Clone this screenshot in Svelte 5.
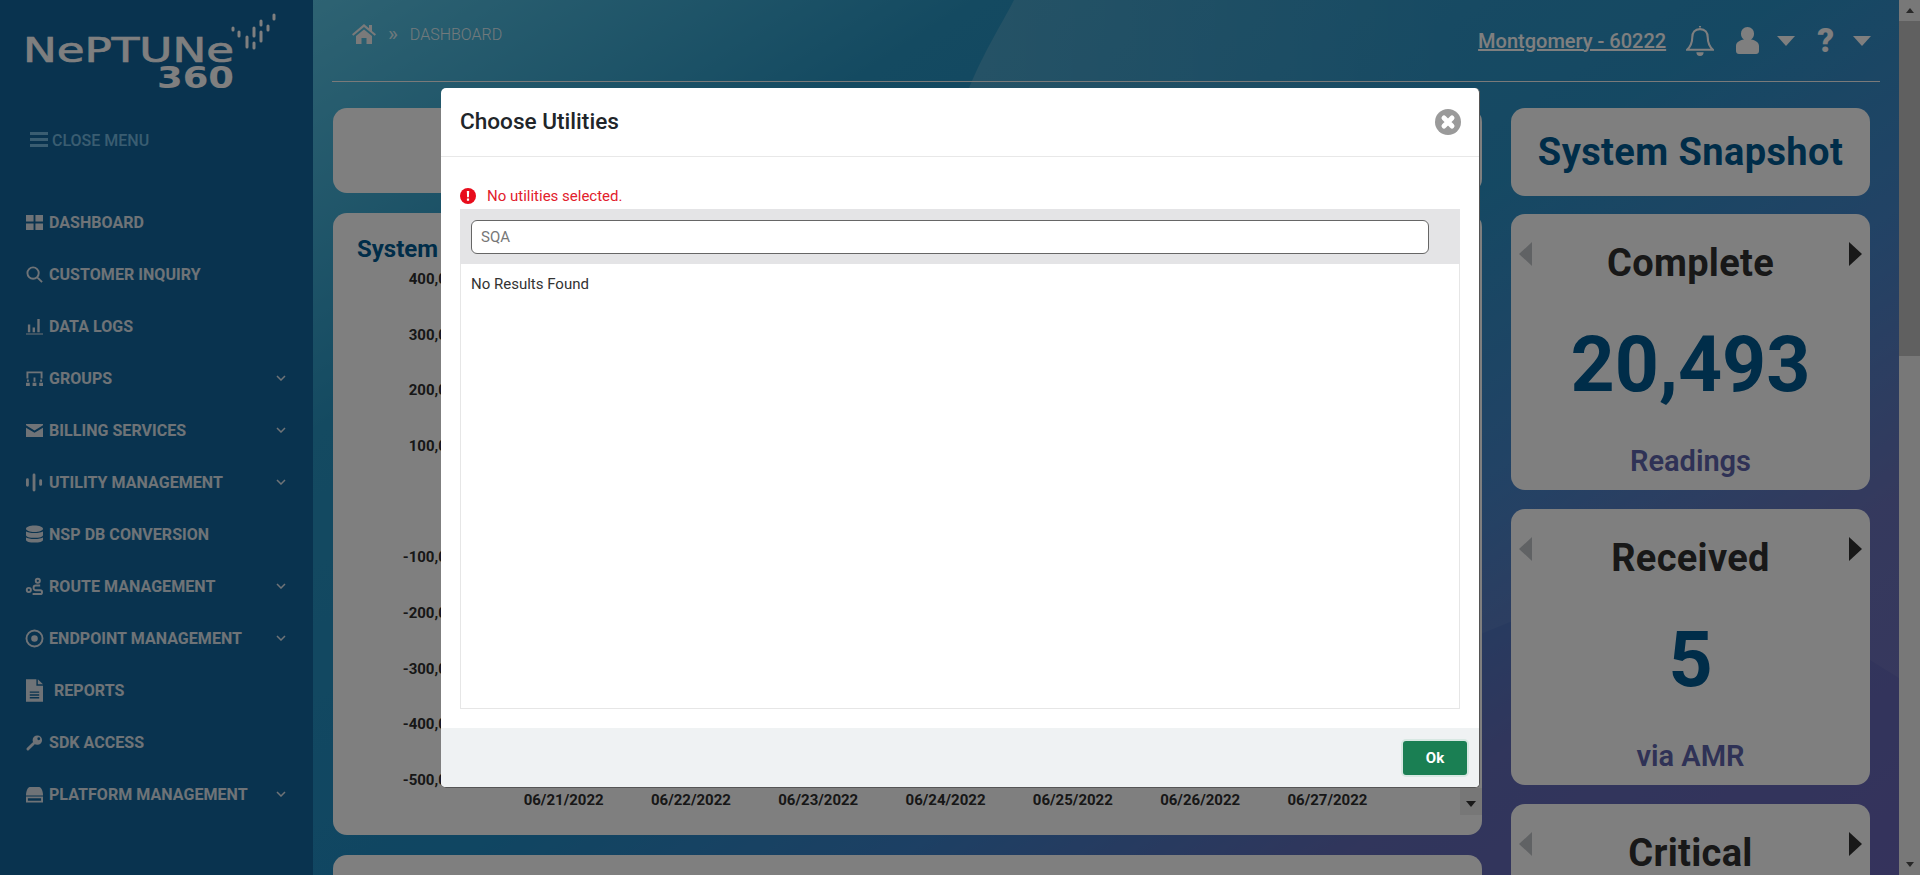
<script>
  const navItems = [
    { label: 'DASHBOARD', fill: 'M0 1h8v7H0zM10 1h8v7h-8zM0 10h8v7H0zM10 10h8v7h-8z' },
    { label: 'CUSTOMER INQUIRY', stroke: 'M7.5 1.5a6 6 0 1 0 0 12a6 6 0 0 0 0-12zM12 12l5 5' },
    { label: 'DATA LOGS', fill: 'M2 7h2.5v8H2zM7 10h2.5v5H7zM12 1h2.5v14H12zM0 16.5h18v1H0z' },
    { label: 'GROUPS', stroke: 'M1.5 9V2.500h15V9', fill: 'M0 13.500h4v3.500H0zM7 13.500h4v3.500H7zM14 13.500h4v3.500h-4zM1 10h2v2.500H1zM8 8h2v4.500H8zM15 10h2v2.500h-2z', more: true },
    { label: 'BILLING SERVICES', fill: 'M0 2h18v1.5L9 9 0 3.5zM0 6l9 5.500L18 6v10H0z', more: true },
    { label: 'UTILITY MANAGEMENT', stroke: 'M1.5 6v6M8.5 1v16M15.5 7v4', wide: true, more: true },
    { label: 'NSP DB CONVERSION', fill: 'M9 0C4 0 0 1.5 0 3.5S4 7 9 7s9-1.5 9-3.5S14 0 9 0zM0 6c2 2.500 16 2.500 18 0v4c0 2-4 3-9 3s-9-1-9-3zM0 12.500c2 2.500 16 2.500 18 0V15c0 2-4 3-9 3s-9-1-9-3z', big: true },
    { label: 'ROUTE MANAGEMENT', stroke: 'M12.500 0.800a2.200 2.200 0 1 0 0 4.400a2.200 2.200 0 0 0 0-4.400zM15 8h-4.500a2.500 2.500 0 0 0 0 5H15a2 2 0 0 1 0 4H7M3 10.500a2.200 2.200 0 1 0 0 4.400a2.200 2.200 0 0 0 0-4.400z', more: true },
    { label: 'ENDPOINT MANAGEMENT', stroke: 'M9 0.500a8.500 8.500 0 1 0 0 17a8.500 8.500 0 0 0 0-17z', fill: 'M9 5.500a3.500 3.500 0 1 0 0 7a3.500 3.500 0 0 0 0-7z', more: true },
    { label: 'REPORTS', fill: 'M0 0h11v7h7v17H0zM4 13v1.500h10V13zM4 16v1.500h10V16zM4 19v1.500h10V19zM12.500 0L18 5.500h-5.500z', tall: true },
    { label: 'SDK ACCESS', fill: 'M12 1.500a5 5 0 1 0 0 10a5 5 0 0 0 0-10zM13.500 3.500a1.500 1.500 0 1 1 0 3a1.500 1.500 0 0 1 0-3z', stroke: 'M8 10l-6 6', wide: true },
    { label: 'PLATFORM MANAGEMENT', fill: 'M4 1h10c2 0 4 4 4 9H0c0-5 2-9 4-9z', stroke: 'M1 12h16v4.500H1z', more: true }
  ];

  const yLabels = ['400,000', '300,000', '200,000', '100,000', '0', '-100,000', '-200,000', '-300,000', '-400,000', '-500,000'];
  const dates = ['06/21/2022', '06/22/2022', '06/23/2022', '06/24/2022', '06/25/2022', '06/26/2022', '06/27/2022'];
  const stats = [
    { title: 'Complete', value: '20,493', sub: 'Readings' },
    { title: 'Received', value: '5', sub: 'via AMR' },
    { title: 'Critical' }
  ];
  const signal = [[233, 28, 30], [239, 32, 36], [247, 37, 47], [254, 28, 36], [254, 43, 48], [261, 21, 25], [261, 32, 41], [268, 26, 30], [274, 15, 19]];
</script>

<div class="page">
  <aside class="sidebar">
    <svg class="logo" viewBox="0 0 290 100" width="290" height="100">
      <text class="logo-word" x="23" y="62" textLength="211" lengthAdjust="spacingAndGlyphs">NePTUNe</text>
      <text class="logo-num" x="157" y="88" textLength="77" lengthAdjust="spacingAndGlyphs">360</text>
      {#each signal as s}
        <path class="logo-dot" d="M{s[0]} {s[1]}V{s[2]}" />
      {/each}
    </svg>
    <div class="close-menu">
      <svg width="18" height="16" viewBox="0 0 18 16"><path d="M0 0h18v3H0zM0 6h18v3H0zM0 12h18v3H0z" /></svg>
      <span>CLOSE MENU</span>
    </div>
    <nav class="nav">
      {#each navItems as item}
        <div class="nav-item">
          <svg class="nav-icon" class:tall={item.tall} class:big={item.big} viewBox={item.tall ? '0 0 18 24' : '0 0 18 18'}>
            {#if item.fill}<path class="f" d={item.fill} />{/if}
            {#if item.stroke}<path class="s" class:wide={item.wide} d={item.stroke} />{/if}
          </svg>
          <span class:indent={item.tall}>{item.label}</span>
          {#if item.more}
            <svg class="chevron" viewBox="0 0 10 6"><path d="M1 1l4 4 4-4" /></svg>
          {/if}
        </div>
      {/each}
    </nav>
  </aside>

  <div class="main">
    <svg class="swoosh" viewBox="0 0 1586 875" width="1586" height="875">
      <defs>
        <linearGradient id="swooshFade" gradientUnits="userSpaceOnUse" x1="640" y1="0" x2="1150" y2="0">
          <stop offset="0" stop-color="#fff" stop-opacity="0.17" />
          <stop offset="1" stop-color="#fff" stop-opacity="0.05" />
        </linearGradient>
      </defs>
      <path fill="url(#swooshFade)" d="M701 0C670 60 640 90 600 300Q800 800 1170 633L1197 622Q1400 560 1557 660L1586 678V0Z" />
    </svg>

    <header class="topbar">
      <div class="crumbs">
        <svg class="home" viewBox="0 0 24 20" width="24" height="20">
          <path d="M12 0l5 4.300V1h3v5.900l4 3.400-1.300 1.500L12 3 1.300 11.800 0 10.300zM4 12l8-6.600 8 6.600v8h-5.500v-6h-5v6H4z" />
        </svg>
        <span class="sep">»</span>
        <span class="crumb">DASHBOARD</span>
      </div>
      <div class="top-right">
        <span class="site">Montgomery - 60222</span>
        <svg class="bell" viewBox="0.500 0 27 31" width="28" height="32">
          <path d="M14 2.500V1M14 4c-5 0-7.500 3.500-7.500 8 0 6-2 9-5 12h25c-3-3-5-6-5-12 0-4.500-2.500-8-7.500-8z" />
          <path class="clap" d="M10.500 26.500a3.500 3.500 0 0 0 7 0z" />
        </svg>
        <svg class="user" viewBox="0 0 23 27" width="23" height="27">
          <path d="M11.500 0a6.500 6.500 0 0 1 6.500 7c0 2.500-1.200 4.500-3 5.600 4.500.6 8 3 8 6.400v5c0 1.700-1.300 3-3 3H3c-1.700 0-3-1.300-3-3v-5c0-3.400 3.500-5.800 8-6.400C6.200 11.500 5 9.500 5 7a6.500 6.500 0 0 1 6.500-7z" />
        </svg>
        <span class="caret"></span>
        <span class="help">?</span>
        <span class="caret last"></span>
      </div>
    </header>

    <div class="content">
      <div class="left-col">
        <section class="card filter-card"></section>

        <section class="card chart-card">
          <h2>System</h2>
          <div class="y-axis">
            {#each yLabels as label}
              <span>{label}</span>
            {/each}
          </div>
          <div class="x-axis">
            {#each dates as d}
              <span>{d}</span>
            {/each}
          </div>
          <div class="chart-scroll"><i></i></div>
        </section>

        <section class="card grow"></section>
      </div>

      <div class="right-col">
        <section class="card snapshot">System Snapshot</section>
        {#each stats as stat}
          <section class="card stat">
            <div class="stat-head">
              <i class="tri left"></i>
              <h3>{stat.title}</h3>
              <i class="tri right"></i>
            </div>
            {#if stat.value}
              <div class="stat-value">{stat.value}</div>
              <div class="stat-sub">{stat.sub}</div>
            {/if}
          </section>
        {/each}
      </div>
    </div>
  </div>

  <div class="scrollbar">
    <div class="sb-btn"><i class="up"></i></div>
    <div class="sb-thumb"></div>
    <div class="sb-track"></div>
    <div class="sb-btn"><i class="down"></i></div>
  </div>

  <div class="backdrop">
    <div class="modal">
      <div class="modal-head">
        <h1>Choose Utilities</h1>
        <svg class="close" viewBox="0 0 26 26" width="26" height="26">
          <circle cx="13" cy="13" r="13" />
          <path d="M9 9l8 8M17 9l-8 8" />
        </svg>
      </div>
      <div class="modal-body">
        <div class="alert">
          <svg viewBox="0 0 16 16" width="16" height="16">
            <circle cx="8" cy="8" r="8" />
            <path d="M6.800 3h2.400l-.3 6.300H7.100zM6.900 10.400h2.200v2.300H6.900z" />
          </svg>
          <span>No utilities selected.</span>
        </div>
        <div class="search-bar">
          <input type="text" placeholder="SQA" />
        </div>
        <div class="results">No Results Found</div>
      </div>
      <div class="modal-foot">
        <button type="button">Ok</button>
      </div>
    </div>
  </div>
</div>

<style>
  :global(body) {
    overflow: hidden;
  }
  .page {
    position: relative;
    display: flex;
    width: 1920px;
    height: 875px;
    overflow: hidden;
    font-family: Roboto, "Liberation Sans", sans-serif;
  }

  /* sidebar */
  .sidebar {
    flex: 0 0 313px;
    background: #13669e;
    color: #dfe7ef;
  }
  .logo {
    display: block;
  }
  .logo-word {
    font-family: "DejaVu Sans", sans-serif;
    font-size: 34px;
    fill: #fff;
    stroke: #fff;
    stroke-width: 0.7;
  }
  .logo-num {
    font-family: "DejaVu Sans", sans-serif;
    font-weight: 700;
    font-size: 31px;
    fill: #fff;
  }
  .logo-dot {
    stroke: #fff;
    stroke-width: 3;
    stroke-linecap: round;
  }
  .close-menu {
    display: flex;
    align-items: center;
    gap: 4px;
    margin: 30px 0 0 30px;
    height: 20px;
    font-size: 16px;
    font-weight: 500;
    color: #9fdfff;
    opacity: 0.7;
  }
  .close-menu svg {
    fill: #9fdfff;
  }
  .nav {
    margin-top: 46px;
  }
  .nav-item {
    display: flex;
    align-items: center;
    height: 52px;
    padding-left: 26px;
    font-size: 16px;
    font-weight: 700;
    letter-spacing: 0.05px;
  }
  .nav-item span {
    margin-left: 6px;
  }
  .nav-item span.indent {
    margin-left: 11px;
  }
  .nav-icon {
    width: 17px;
    height: 17px;
    overflow: visible;
    flex: none;
  }
  .nav-icon.big {
    height: 20px;
  }
  .nav-icon.tall {
    height: 23px;
  }
  .nav-icon .f {
    fill: #dfe7ef;
    fill-rule: evenodd;
  }
  .nav-icon .s {
    fill: none;
    stroke: #dfe7ef;
    stroke-width: 2;
  }
  .nav-icon .s.wide {
    stroke-width: 3;
    stroke-linecap: round;
  }
  .chevron {
    width: 10px;
    height: 6px;
    margin-left: auto;
    margin-right: 27px;
    fill: none;
    stroke: #dfe7ef;
    stroke-width: 1.5;
  }

  /* main */
  .main {
    position: relative;
    flex: 1;
    min-width: 0;
    background: linear-gradient(147deg, #5cc6e6 0%, #2894c2 23%, #208cc4 50%, #3a80c8 65%, #626cb8 80%, #6a66b8 100%);
  }
  .swoosh {
    position: absolute;
    left: 0;
    top: 0;
  }
  .topbar {
    position: relative;
    display: flex;
    justify-content: space-between;
    height: 81px;
    margin: 0 19px 0 19px;
    border-bottom: 1px solid #f4f4f4;
  }
  .crumbs {
    display: flex;
    align-items: center;
    gap: 12px;
    height: 68px;
    padding-left: 20px;
    color: #fff;
  }
  .home {
    fill: #f4f4f4;
  }
  .sep {
    font-size: 21px;
    line-height: 1;
    opacity: 0.8;
  }
  .crumb {
    font-size: 16px;
    font-weight: 300;
    opacity: 0.85;
  }
  .top-right {
    display: flex;
    align-items: center;
    height: 81px;
    color: #fff;
    padding-right: 9px;
  }
  .site {
    font-size: 20px;
    font-weight: 500;
    color: #fff;
    text-decoration: underline;
    margin-right: 20px;
  }
  .bell {
    fill: none;
    stroke: #fff;
    stroke-width: 2;
    margin-right: 22px;
  }
  .clap {
    fill: #fff;
    stroke: none;
  }
  .user {
    fill: #fff;
    margin-right: 18px;
  }
  .caret {
    width: 0;
    height: 0;
    border-left: 9.5px solid transparent;
    border-right: 9.5px solid transparent;
    border-top: 10px solid #fff;
    margin-right: 22px;
  }
  .caret.last {
    margin-right: 0;
    margin-left: 19px;
  }
  .help {
    font-size: 33px;
    font-weight: 900;
    color: #fff;
    line-height: 1;
  }

  .content {
    position: relative;
    display: grid;
    grid-template-columns: 1149px 359px;
    gap: 29px;
    padding: 26px 0 0 20px;
  }
  .card {
    background: #fff;
    border-radius: 14px;
  }
  .left-col {
    display: flex;
    flex-direction: column;
    gap: 20px;
  }
  .filter-card {
    height: 85px;
  }
  .chart-card {
    position: relative;
    height: 622px;
    padding-top: 21px;
    box-sizing: border-box;
    font-size: 15px;
    font-weight: 700;
    color: #2e2e2e;
  }
  .chart-card h2 {
    margin: 0 0 0 24px;
    font-size: 24px;
    line-height: 30px;
    font-weight: 700;
    color: #005a92;
  }
  .y-axis {
    display: flex;
    flex-direction: column;
    justify-content: space-between;
    width: 131px;
    height: 519px;
    margin-top: 6px;
    line-height: 18px;
    text-align: right;
  }
  .x-axis {
    display: flex;
    margin: 2px 0 0 167px;
    line-height: 18px;
    text-align: center;
  }
  .x-axis span {
    flex: 0 0 127.3px;
  }
  .chart-scroll {
    position: absolute;
    right: 0;
    bottom: 20px;
    width: 22px;
    height: 27px;
    background: #eee;
    display: flex;
    align-items: center;
    justify-content: center;
  }
  .chart-scroll i {
    border-left: 5px solid transparent;
    border-right: 5px solid transparent;
    border-top: 6px solid #333;
    margin-top: 4px;
  }
  .grow {
    height: 200px;
  }
  .right-col {
    display: flex;
    flex-direction: column;
    gap: 19px;
  }
  .snapshot {
    height: 88px;
    margin-bottom: -1px;
    display: flex;
    align-items: center;
    justify-content: center;
    font-size: 38px;
    font-weight: 700;
    letter-spacing: 0.4px;
    color: #005a92;
  }
  .stat {
    height: 276px;
    flex: none;
    text-align: center;
    box-sizing: border-box;
    padding-top: 21px;
  }
  .stat-head {
    display: flex;
    align-items: center;
    justify-content: space-between;
    padding: 0 8px;
    height: 56px;
  }
  .stat-head h3 {
    margin: 0;
    font-size: 38px;
    font-weight: 700;
    letter-spacing: 0.3px;
    color: #303030;
    line-height: 56px;
  }
  .tri {
    width: 0;
    height: 0;
    border-top: 12.5px solid transparent;
    border-bottom: 12.5px solid transparent;
    margin-top: -18px;
  }
  .tri.left {
    border-right: 13px solid #c0c4c8;
  }
  .tri.right {
    border-left: 13px solid #303030;
  }
  .stat-value {
    font-size: 77px;
    font-weight: 700;
    line-height: 84px;
    margin-top: 32px;
    color: #005a92;
  }
  .stat-sub {
    font-size: 29px;
    font-weight: 600;
    line-height: 36px;
    margin-top: 36px;
    color: #5e64ac;
  }

  /* scrollbar */
  .scrollbar {
    flex: 0 0 21px;
    display: flex;
    flex-direction: column;
    background: #f1f1f1;
  }
  .sb-btn {
    height: 21px;
    display: flex;
    align-items: center;
    justify-content: center;
  }
  .sb-btn i {
    border-left: 4.5px solid transparent;
    border-right: 4.5px solid transparent;
  }
  .sb-btn .up {
    border-bottom: 5px solid #505050;
  }
  .sb-btn .down {
    border-top: 5px solid #505050;
  }
  .sb-thumb {
    height: 335px;
    background: #c1c1c1;
  }
  .sb-track {
    flex: 1;
  }

  /* modal */
  .backdrop {
    position: absolute;
    inset: 0;
    display: flex;
    justify-content: center;
    align-items: flex-start;
    padding: 88px 0 0 1px;
    background: rgba(0, 0, 0, 0.5);
  }
  .modal {
    width: 1039px;
    height: 700px;
    box-sizing: border-box;
    display: flex;
    flex-direction: column;
    background: #fff;
    border-radius: 5px;
    border-right: 1px solid #555;
    border-bottom: 1px solid #555;
    overflow: hidden;
  }
  .modal-head {
    display: flex;
    align-items: center;
    justify-content: space-between;
    height: 67px;
    flex: none;
    padding: 0 18px 1px 19px;
    border-bottom: 1px solid #e8e8e8;
  }
  .modal-head h1 {
    margin: 0;
    font-size: 22.600px;
    font-weight: 500;
    color: #212529;
  }
  .close circle {
    fill: #9a9a9a;
  }
  .close path {
    fill: none;
    stroke: #fff;
    stroke-width: 5;
    stroke-linecap: round;
  }
  .modal-body {
    flex: 1;
    display: flex;
    flex-direction: column;
    padding: 28px 19px 19px;
    min-height: 0;
  }
  .alert {
    display: flex;
    align-items: center;
    gap: 11px;
    height: 21px;
    margin-bottom: 3px;
    font-size: 15px;
    color: #e2202c;
  }
  .alert circle {
    fill: #e80c1c;
  }
  .alert path {
    fill: #fff;
  }
  .search-bar {
    flex: none;
    height: 55px;
    box-sizing: border-box;
    padding: 11px 31px 0 11px;
    background: #e4e4e6;
  }
  .search-bar input {
    display: block;
    width: 100%;
    height: 34px;
    box-sizing: border-box;
    border: 1px solid #666;
    border-radius: 6px;
    padding: 0 9px;
    font: 15px Roboto, sans-serif;
    background: #fff;
  }
  .search-bar input::placeholder {
    color: #777;
  }
  .results {
    flex: 1;
    padding: 10px 10px;
    font-size: 15px;
    line-height: 20px;
    color: #333;
    border: 1px solid #e6e6e6;
    border-top: none;
  }
  .modal-foot {
    flex: none;
    height: 59px;
    display: flex;
    align-items: center;
    justify-content: flex-end;
    padding-right: 12px;
    background: #eff2f3;
  }
  .modal-foot button {
    width: 64px;
    height: 34px;
    border: none;
    border-radius: 3px;
    background: #1a7f53;
    color: #fff;
    font: 700 15px Roboto, sans-serif;
    box-shadow: 0 0 0 2px #d7e8e2;
  }
</style>
